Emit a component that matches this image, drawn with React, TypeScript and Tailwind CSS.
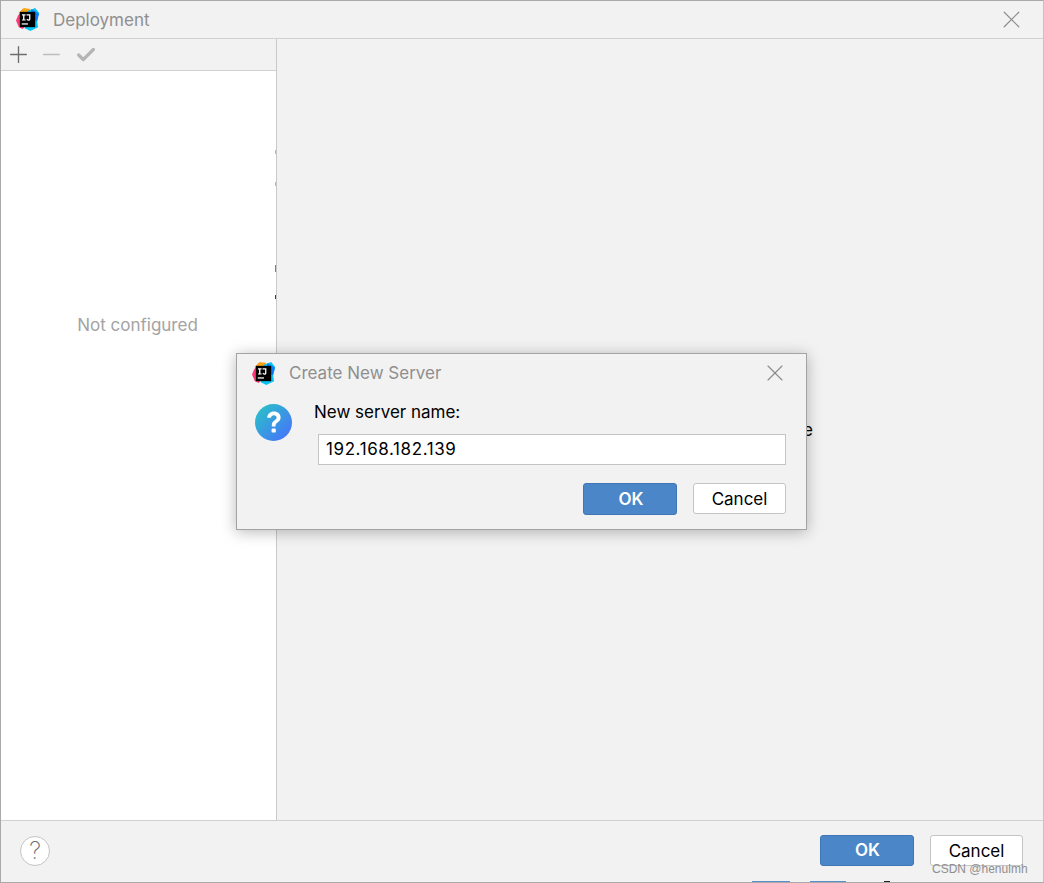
import { Plus, Minus, Check, X } from 'lucide-react';

function IdeaLogo({ size }: { size: number }) {
  return (
    <svg width={size} height={size} viewBox="0 0 24 24" className="shrink-0">
      <path d="M2 8 L7 1 L14 1 L14 14 L7 22 L3 20 L0 13 Z" fill="#fc3a78" />
      <path d="M3 5 L8 0 L15 1 L13 5 L3 6 Z" fill="#f9a412" />
      <path d="M12 3 L20 0 L24 5 L22 13 L23 20 L15 24 L9 21 Z" fill="#07c3f2" />
      <path d="M16 1 L24 6 L22 14 L15 10 Z" fill="#087cfa" />
      <rect x="4" y="4" width="16" height="16" fill="#000" />
      <rect x="6" y="16" width="6.5" height="1.3" fill="#fff" />
      <path d="M6.2 6.6 H10 V7.7 H8.8 V12 H10 V13.1 H6.2 V12 H7.4 V7.7 H6.2 Z" fill="#fff" />
      <path d="M11 6.6 H15 V11.4 C15 12.7 14.3 13.2 13 13.2 C11.9 13.2 11.2 12.7 10.9 12 L11.9 11.3 C12.1 11.8 12.5 12 12.9 12 C13.4 12 13.7 11.8 13.7 11.2 V7.7 H11 Z" fill="#fff" />
    </svg>
  );
}

function QuestionIcon() {
  return (
    <svg width="37" height="37" viewBox="0 0 37 37" className="shrink-0">
      <defs>
        <linearGradient id="questionFill" x1="0" y1="0" x2="1" y2="1">
          <stop offset="0" stopColor="#27c8c4" />
          <stop offset="1" stopColor="#4a6cff" />
        </linearGradient>
      </defs>
      <circle cx="18.5" cy="18.5" r="18.5" fill="url(#questionFill)" />
      <path
        d="M12.2 13.8 C12.4 10 15.2 7.6 19 7.6 C22.8 7.6 25.6 9.9 25.6 13.4 C25.6 15.8 24.3 17.2 22.6 18.4 C21 19.5 20.6 20.2 20.6 21.6 V22.4 H16.8 V21.2 C16.8 19 17.6 17.7 19.3 16.5 C20.9 15.4 21.6 14.8 21.6 13.6 C21.6 12.2 20.6 11.2 19 11.2 C17.3 11.2 16.2 12.3 16 13.8 Z"
        fill="#fff"
      />
      <rect x="16.6" y="24.4" width="4.2" height="4.2" rx="1.2" fill="#fff" />
    </svg>
  );
}

export default function App() {
  return (
    <div className="relative w-[1044px] h-[883px] overflow-hidden bg-[#f2f2f2] font-['Inter','Noto_Sans',sans-serif]">
      <div className="flex flex-col h-[883px] border-t border-l border-r border-b border-t-[#a9a9a9] border-l-[#a9a9a9] border-r-[#c4c4c4] border-b-[#a9a9a9]">
        <div className="flex items-center h-[38px] shrink-0 pl-[15px] pr-[17px] border-b border-[#d1d1d1]">
          <IdeaLogo size={23} />
          <span className="ml-[14px] pt-[2px] text-[17px] text-[#8f8f8f]">Deployment</span>
          <X className="ml-auto w-[29px] h-[29px] text-[#8c8c8c]" strokeWidth={1} />
        </div>

        <div className="flex flex-1 min-h-0">
          <div className="flex flex-col w-[275px] shrink-0 border-r border-[#c9c9c9] box-content">
            <div className="flex items-center h-[32px] shrink-0 pl-[4px] border-b border-[#d1d1d1]">
              <Plus className="w-[27px] h-[27px] text-[#6e6e6e]" strokeWidth={1.2} />
              <Minus className="ml-[6px] w-[27px] h-[27px] text-[#bdbdbd]" strokeWidth={1.2} />
              <Check className="ml-[10px] w-[22px] h-[22px] text-[#b5b5b5]" strokeWidth={3.6} />
            </div>
            <div className="flex flex-1 justify-center bg-white pt-[243px] pr-[2px]">
              <span className="text-[17px] leading-[22px] text-[#a3a3a3]">Not configured</span>
            </div>
          </div>
          <div className="flex-1" />
        </div>

        <div className="flex items-center h-[62px] shrink-0 pl-[19px] pr-[20px] border-t border-[#d1d1d1] pb-[2px]">
          <div className="flex items-center justify-center w-[30px] h-[30px] rounded-full bg-white border border-[#c4c4c4] text-[24px] text-[#6e6e6e] font-extralight">
            ?
          </div>
          <button className="ml-auto w-[94px] h-[31px] pt-[1px] pl-[1px] rounded-[3px] bg-[#4a86c8] border border-[#3f77b5] text-[17px] font-semibold text-white">
            OK
          </button>
          <button className="ml-[16px] w-[93px] h-[31px] pt-[2px] rounded-[3px] bg-white border border-[#c4c4c4] text-[17px] text-black">
            Cancel
          </button>
        </div>
      </div>

      {/* bits of the window behind, showing at the bottom edge */}
      <div className="absolute left-[752px] top-[881px] w-[38px] h-[1px] bg-[#5a8fc8]" />
      <div className="absolute left-[810px] top-[881px] w-[36px] h-[1px] bg-[#5a8fc8]" />
      <div className="absolute left-[884px] top-[881px] w-[6px] h-[1px] bg-[#222222]" />
      <div className="absolute left-[275px] top-[150px] w-[1px] h-[4px] bg-[#9dbce0]" />
      <div className="absolute left-[275px] top-[182px] w-[1px] h-[4px] bg-[#9dbce0]" />
      <div className="absolute left-[275px] top-[265px] w-[1px] h-[7px] bg-[#4f9a6a]" />
      <div className="absolute left-[275px] top-[295px] w-[1px] h-[4px] bg-[#2b3a6b]" />

      <span className="absolute left-[803px] top-[418px] text-[17px] text-black">e</span>

      <div className="absolute left-[236px] top-[353px] w-[571px] h-[177px] flex flex-col bg-[#f2f2f2] border border-[#a3a3a3] shadow-[0_2px_14px_rgba(0,0,0,0.28)]">
        <div className="flex items-center h-[38px] shrink-0 pl-[15px] pr-[17px]">
          <IdeaLogo size={23} />
          <span className="ml-[14px] pt-[2px] text-[17px] text-[#8f8f8f]">Create New Server</span>
          <X className="ml-auto w-[28px] h-[28px] text-[#8c8c8c]" strokeWidth={1} />
        </div>
        <div className="flex pl-[18px] pr-[20px] pt-[12px]">
          <QuestionIcon />
          <div className="flex-1 ml-[22px] -mt-[2px]">
            <div className="text-[17px] leading-[20px] text-black">New server name:</div>
            <div className="ml-[4px] mt-[12px] flex items-center h-[31px] pl-[7px] bg-white border border-[#c4c4c4] text-[17px] tracking-[0.6px] text-black">
              192.168.182.139
            </div>
            <div className="flex justify-end gap-[16px] mt-[18px]">
              <button className="w-[94px] h-[32px] pt-[1px] pl-[2px] rounded-[3px] bg-[#4a86c8] border border-[#3f77b5] text-[17px] font-semibold text-white">
                OK
              </button>
              <button className="w-[93px] h-[31px] pt-[2px] rounded-[3px] bg-white border border-[#c4c4c4] text-[17px] text-black">
                Cancel
              </button>
            </div>
          </div>
        </div>
      </div>

      <span className="absolute left-[932px] top-[861px] text-[12px] leading-[16px] text-[#8f8f8f] font-['Liberation_Sans',sans-serif]">
        CSDN @henulmh
      </span>
    </div>
  );
}
